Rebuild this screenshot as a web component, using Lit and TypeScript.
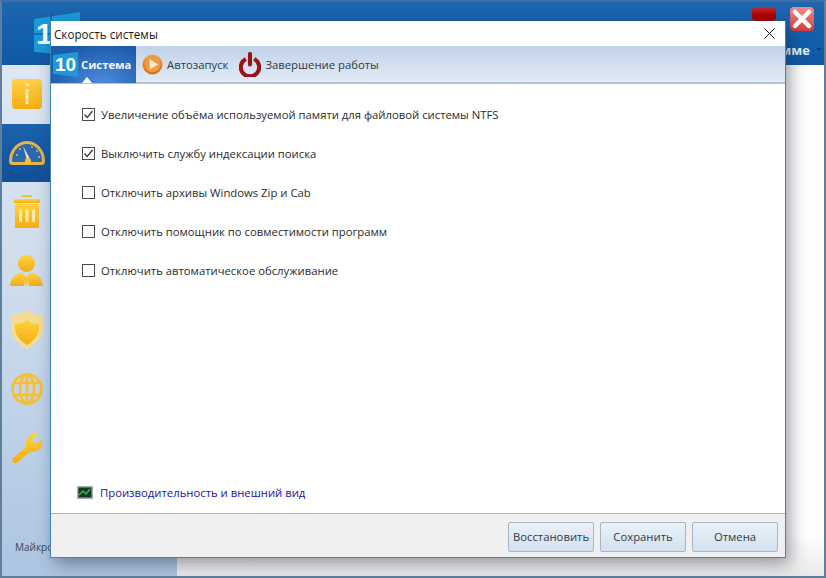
import { LitElement, html, css, svg } from 'lit';
import { customElement } from 'lit/decorators.js';

const GOLD = 'url(#gold)';

// sidebar icons of the main window: [width, height, viewBox, content]
const sideIcons = [
  [32, 32, '0 0 32 32', svg`<rect x="1" y="1" width="30" height="30" rx="4" fill="url(#goldTile)"/><rect x="14.5" y="5" width="3" height="3" fill="#ffe9a8"/><rect x="14.5" y="11" width="3" height="15" fill="#ffe9a8"/>`],
  [36, 24, '0 0 36 24', svg`<path d="M0 20 C0 8 9 0 18 0 C27 0 36 8 36 20 Q36 24 33 24 L3 24 Q0 24 0 20Z" fill="#e3b54a"/><path d="M3 20 C3 9 11 3 18 3 C25 3 33 9 33 20 Q33 21 31 21 L5 21 Q3 21 3 20Z" fill="#2a69b2"/><g fill="#e3b54a"><circle cx="8" cy="14" r="1"/><circle cx="11" cy="8" r="1"/><circle cx="23" cy="6" r="1"/><circle cx="28" cy="10" r="1"/><circle cx="30" cy="16" r="1"/></g><path d="M14 5 L18 19 L21 18Z" fill="#f6e6b8"/><circle cx="19" cy="20" r="3" fill="#f2c23e"/>`],
  [28, 33, '0 0 28 33', svg`<rect x="9" y="0" width="10" height="2" fill="${GOLD}"/><rect x="1" y="4" width="26" height="4" fill="${GOLD}"/><path d="M2 9H26V33H2Z" fill="${GOLD}"/><rect x="6" y="14" width="3" height="13" rx="1.5" fill="#ffe9a8"/><rect x="12.5" y="14" width="3" height="13" rx="1.5" fill="#ffe9a8"/><rect x="19" y="14" width="3" height="13" rx="1.5" fill="#ffe9a8"/>`],
  [33, 31, '0 0 33 31', svg`<circle cx="16.5" cy="8.5" r="8.5" fill="${GOLD}"/><path d="M0 31 C1 22 6 19 12 17.5 L15.5 21 L14 31Z M33 31 C32 22 27 19 21 17.5 L17.5 21 L19 31Z" fill="${GOLD}"/><path d="M15.5 21.5 H17.5 L18.5 28 L16.5 31 L14.5 28Z" fill="#f7c52c"/>`],
  [32, 39, '0 0 32 39', svg`<path d="M16 0 C21 4 26 5 32 5 L32 18 C32 28 24 34 16 39 C8 34 0 28 0 18 L0 5 C6 5 11 4 16 0Z" fill="#f6dc92"/><path d="M16 10 C20 13 24 14 28 14 L28 18 C28 26 22 31 16 35 C10 31 4 26 4 18 L4 14 C8 14 12 13 16 10Z" fill="${GOLD}"/>`],
  [32, 32, '0 0 32 32', svg`<g fill="none" stroke="#f5c030" stroke-width="2.6"><circle cx="16" cy="16" r="14.5"/><ellipse cx="16" cy="16" rx="7" ry="14.5"/><path d="M3 10H29M3 22H29M16 1V31"/></g>`],
  [32, 31, '0 0 32 31', svg`<path d="M3 31 Q0 29 2 26 L15 15 C14 6 20 -1 28 1 L21 7 L24 12 L31 8 C33 15 27 21 19 20 L7 30 Q4 32 3 31Z" fill="${GOLD}"/>`],
] as const;

const checks = [
  ['Увеличение объёма используемой памяти для файловой системы NTFS', true],
  ['Выключить службу индексации поиска', true],
  ['Отключить архивы Windows Zip и Cab', false],
  ['Отключить помощник по совместимости программ', false],
  ['Отключить автоматическое обслуживание', false],
] as const;

@customElement('app-root')
export class AppRoot extends LitElement {
  static styles = css`
    :host {
      display: block;
      width: 826px;
      height: 578px;
      position: relative;
      overflow: hidden;
      font-family: 'Open Sans', 'Noto Sans', sans-serif;
      font-size: 11.3px;
      color: #2b2b2b;
    }
    .main {
      box-sizing: border-box;
      width: 826px;
      height: 578px;
      border: 2px solid #5f7f9c;
      border-top-color: #3d6ea8;
      display: flex;
      flex-direction: column;
      background: #fff;
    }
    .head {
      height: 63px;
      flex: none;
      background: linear-gradient(#1f66ae, #0f5dab 70%, #1158a3);
      position: relative;
    }
    .logo { position: absolute; left: 32px; top: 10px; }
    .logo-num {
      position: absolute;
      left: 34px;
      top: 15px;
      font: bold 30px 'Liberation Sans', sans-serif;
      color: #fff;
    }
    .win-btn {
      position: absolute;
      top: 5px;
      width: 24px;
      height: 24px;
      border-radius: 4px;
    }
    .win-min { left: 750px; height: 14px; background: linear-gradient(#cc2a2a, #a80000 60%); }
    .win-close {
      left: 788px;
      background: linear-gradient(#ef8d8d, #d63c3c);
      display: flex;
      align-items: center;
      justify-content: center;
    }
    .head-label {
      position: absolute;
      right: 14px;
      bottom: 6px;
      font-weight: 700;
      font-size: 13px;
      color: #e8f0f8;
    }
    .head-caret {
      position: absolute;
      right: 2px;
      bottom: 14px;
      border: 3px solid transparent;
      border-top-color: #0b3f78;
      border-bottom: none;
    }
    .body { flex: 1; display: flex; min-height: 0; }
    .left {
      width: 175px;
      flex: none;
      background: linear-gradient(#dfe7f2, #cbdaec 50%, #adc5e2);
      position: relative;
    }
    .side { display: flex; flex-direction: column; width: 49px; margin-top: -1px; }
    .side-item {
      box-sizing: border-box;
      height: 59px;
      flex: none;
      display: flex;
      align-items: center;
      justify-content: center;
    }
    .side-item.on {
      background: linear-gradient(#1d62ad, #114f98) padding-box;
      border-top: 1px solid transparent;
    }
    .vendor {
      position: absolute;
      left: 13px;
      bottom: 22px;
      font-size: 10px;
      color: #3a4656;
    }
    .right { flex: 1; background: linear-gradient(#fff 92%, #e9e9e9); }

    .dialog {
      position: absolute;
      left: 50px;
      top: 21px;
      width: 736px;
      height: 537px;
      box-sizing: border-box;
      border: 1px solid #3b87b4;
      border-top: none;
      background: #fff;
      box-shadow: 4px 6px 16px rgba(30, 40, 60, 0.45);
      display: flex;
      flex-direction: column;
    }
    .title {
      height: 25px;
      flex: none;
      display: flex;
      align-items: center;
      justify-content: space-between;
      padding: 0 10px 0 3px;
      font-size: 11.7px;
      color: #1a1a1a;
    }
    .close { display: block; }
    .tabs {
      height: 38px;
      box-sizing: border-box;
      flex: none;
      display: flex;
      align-items: stretch;
      background: linear-gradient(#c0d2e8, #e2ebf6);
      border-bottom: 2px solid #b4c2cf;
    }
    .tab { display: flex; align-items: center; gap: 4px; padding: 0 11px 0 6px; color: #2f3a46; position: relative; }
    .tab.last { padding: 0; }
    .tab.on {
      width: 85px;
      box-sizing: border-box;
      gap: 3px;
      padding: 0 0 0 2px;
      margin-bottom: -1px;
      background: radial-gradient(ellipse at 60% 100%, #4d8bdc, #1d5cab 75%);
      color: #f2f6fb;
      font-weight: 700;
    }
    .tab.on::after {
      content: '';
      position: absolute;
      left: 37%;
      bottom: 0;
      border: 5px solid transparent;
      border-top: none;
      border-bottom: 6px solid #fff;
    }
    .ten {
      width: 25px;
      height: 25px;
      display: flex;
      align-items: center;
      justify-content: center;
      clip-path: polygon(0 12%, 100% 0, 100% 100%, 0 88%);
      background: #1c9ad8;
      color: #fff;
      font: bold 19px 'Liberation Sans', sans-serif;
    }
    .content {
      flex: 1;
      display: flex;
      flex-direction: column;
      justify-content: space-between;
      padding: 20px 0 13px 26px;
      min-height: 0;
    }
    .opts { display: flex; flex-direction: column; gap: 19px; padding-left: 5px; }
    .opt { display: flex; align-items: center; gap: 6px; height: 20px; }
    .box {
      box-sizing: border-box;
      width: 13px;
      height: 13px;
      flex: none;
      border: 1px solid #4a4a4a;
      background: #fff;
      display: flex;
    }
    .perf { display: flex; align-items: center; gap: 7px; color: #1a12a8; }
    .footer {
      height: 44px;
      box-sizing: border-box;
      flex: none;
      border-top: 1px solid #a9b5c0;
      background: #f0f0f0;
      display: flex;
      justify-content: flex-end;
      align-items: center;
      gap: 6px;
      padding: 2px 7px 0 0;
    }
    .btn {
      box-sizing: border-box;
      width: 86px;
      height: 30px;
      padding: 0;
      border: 1px solid #a6b6c6;
      border-radius: 2px;
      background: linear-gradient(#eaf1f8, #d3e1f0);
      color: #2f3a46;
      font: inherit;
    }
  `;

  render() {
    return html`
      <svg width="0" height="0" style="position:absolute">
        <defs>
          <linearGradient id="gold" x1="0" y1="0" x2="0" y2="1">
            <stop offset="0" stop-color="#ffd23c" />
            <stop offset="1" stop-color="#f3ad16" />
          </linearGradient>
          <linearGradient id="goldTile" x1="0" y1="0" x2="0" y2="1">
            <stop offset="0" stop-color="#ffd04a" />
            <stop offset="1" stop-color="#f7ad12" />
          </linearGradient>
          <linearGradient id="orange" x1="0" y1="0" x2="0" y2="1">
            <stop offset="0" stop-color="#f0a050" />
            <stop offset="1" stop-color="#dd6a14" />
          </linearGradient>
        </defs>
      </svg>
      <div class="main">
        <div class="head">
          <svg class="logo" width="48" height="48" viewBox="0 0 48 48">
            <path d="M0 7 L46 0 V44 L0 40Z" fill="#1c9ad8" />
            <path d="M17 0 V46 M0 22 H46" stroke="#0f5dab" stroke-width="1.5" />
          </svg>
          <span class="logo-num">1</span>
          <div class="win-btn win-min"></div>
          <div class="win-btn win-close">
            <svg width="20" height="20" viewBox="0 0 20 20">
              <path d="M3 3 L17 17 M17 3 L3 17" stroke="#fff" stroke-width="4.5" stroke-linecap="round" />
            </svg>
          </div>
          <span class="head-label">мме</span>
          <span class="head-caret"></span>
        </div>
        <div class="body">
          <div class="left">
            <div class="side">
              ${sideIcons.map(
                ([w, h, box, ic], i) => html`
                  <div class="side-item ${i === 1 ? 'on' : ''}">
                    <svg width="${w}" height="${h}" viewBox="${box}">${ic}</svg>
                  </div>
                `,
              )}
            </div>
            <span class="vendor">Майкрософт</span>
          </div>
          <div class="right"></div>
        </div>
      </div>

      <div class="dialog">
        <div class="title">
          <span>Скорость системы</span>
          <svg class="close" width="11" height="11" viewBox="0 0 11 11">
            <path d="M0.5 0.5 L10.5 10.5 M10.5 0.5 L0.5 10.5" stroke="#111" stroke-width="1" />
          </svg>
        </div>
        <div class="tabs">
          <div class="tab on">
            <span class="ten">10</span>
            <span>Система</span>
          </div>
          <div class="tab">
            <svg width="21" height="21" viewBox="0 0 22 22">
              <circle cx="11" cy="11" r="10.5" fill="url(#orange)" />
              <circle cx="11" cy="11" r="8" fill="#f09a3e" />
              <path d="M8 5.5 L17 11 L8 16.5Z" fill="#fbe7cf" />
            </svg>
            <span>Автозапуск</span>
          </div>
          <div class="tab last">
            <svg width="22" height="25" viewBox="0 0 24 26">
              <path d="M7.5 7 A10 10 0 1 0 16.5 7" fill="none" stroke="#961518" stroke-width="4.5" />
              <path d="M12 1.5 V13" stroke="#961518" stroke-width="4.5" stroke-linecap="round" />
            </svg>
            <span>Завершение работы</span>
          </div>
        </div>
        <div class="content">
          <div class="opts">
            ${checks.map(
              ([label, on]) => html`
                <label class="opt">
                  <span class="box">
                    ${on
                      ? html`<svg width="11" height="11" viewBox="0 0 11 11">
                          <path d="M1.5 5.5 L4.2 8.5 L9.5 2" fill="none" stroke="#333" stroke-width="1.2" />
                        </svg>`
                      : ''}
                  </span>
                  <span>${label}</span>
                </label>
              `,
            )}
          </div>
          <div class="perf">
            <svg width="16" height="13" viewBox="0 0 16 13">
              <rect width="16" height="13" fill="#a9aeb0" />
              <rect x="1.5" y="1.5" width="13" height="10" fill="#12381f" />
              <path d="M2 9 L6 5 L9 8 L13 3" fill="none" stroke="#3fb55a" stroke-width="1.4" />
            </svg>
            <span>Производительность и внешний вид</span>
          </div>
        </div>
        <div class="footer">
          <button class="btn">Восстановить</button>
          <button class="btn">Сохранить</button>
          <button class="btn">Отмена</button>
        </div>
      </div>
    `;
  }
}
